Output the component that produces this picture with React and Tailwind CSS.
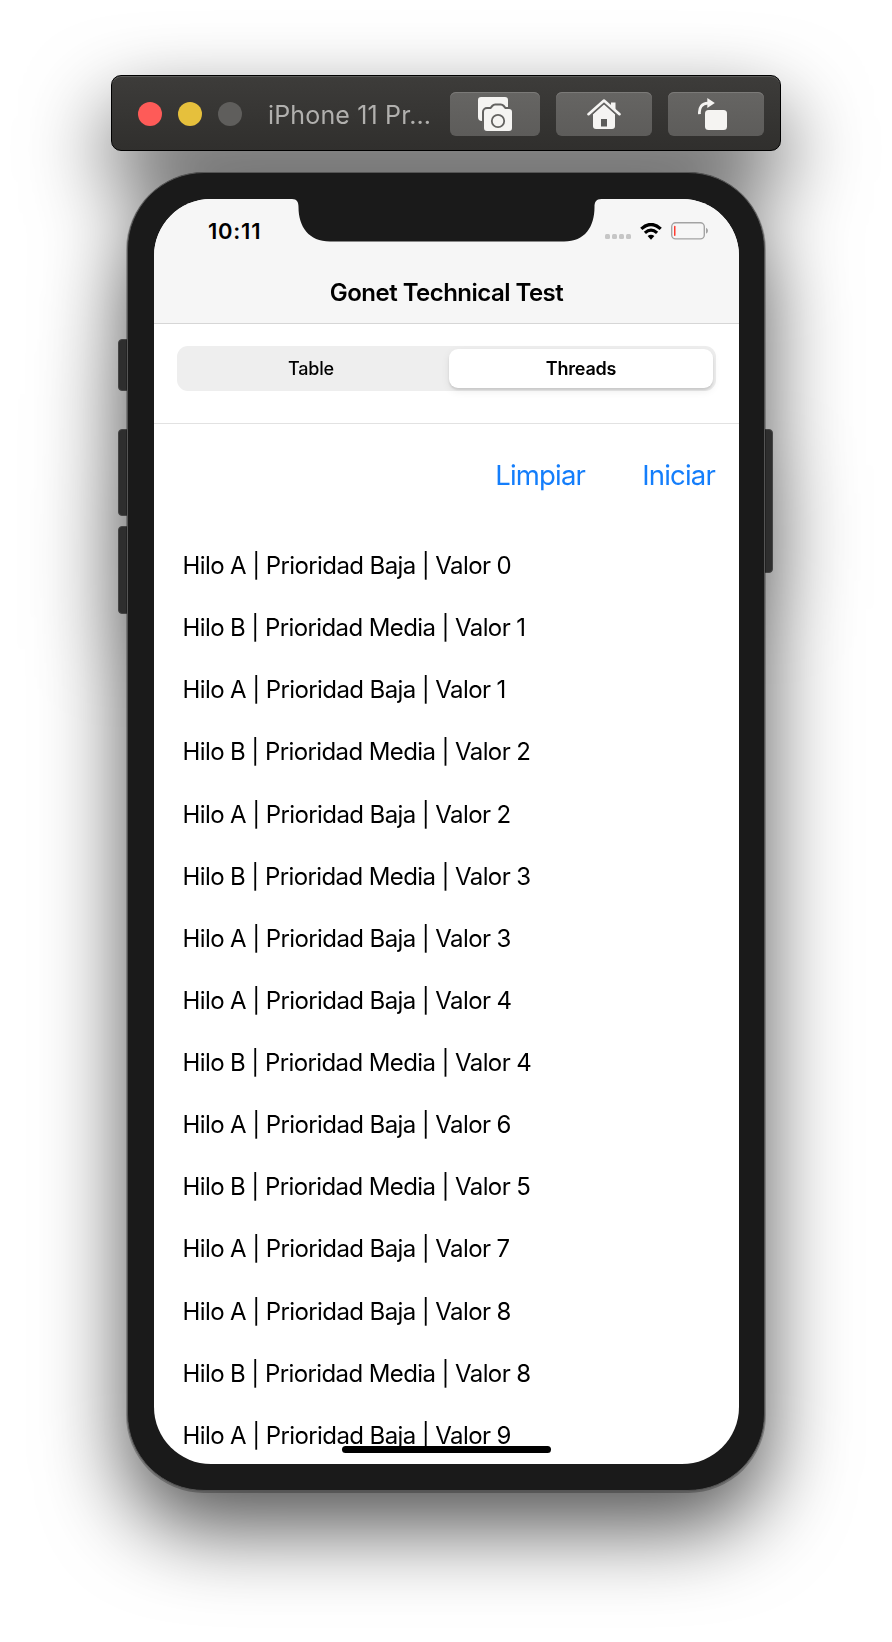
const rows = [
  ["A", "Baja", 0],
  ["B", "Media", 1],
  ["A", "Baja", 1],
  ["B", "Media", 2],
  ["A", "Baja", 2],
  ["B", "Media", 3],
  ["A", "Baja", 3],
  ["A", "Baja", 4],
  ["B", "Media", 4],
  ["A", "Baja", 6],
  ["B", "Media", 5],
  ["A", "Baja", 7],
  ["A", "Baja", 8],
  ["B", "Media", 8],
  ["A", "Baja", 9],
];

function CameraIcon() {
  return (
    <svg width="34" height="34" viewBox="0 0 34 34">
      <path d="M3 0H27a3 3 0 0 1 3 3V11H0V3a3 3 0 0 1 3-3ZM0 10H12V24H4a4 4 0 0 1-4-4Z" fill="#f5f4f2" />
      <path
        d="M9 12h4l2.2-2.6Q16 8.500 17.200 8.500h5.600Q24 8.500 24.800 9.400L27 12h4a3 3 0 0 1 3 3V31a3 3 0 0 1-3 3H9a3 3 0 0 1-3-3V15a3 3 0 0 1 3-3Z"
        fill="#f5f4f2"
        stroke="#636260"
        strokeWidth="4"
        paintOrder="stroke"
      />
      <circle cx="20" cy="24" r="6.200" fill="none" stroke="#636260" strokeWidth="1.800" />
    </svg>
  );
}

function HomeIcon() {
  return (
    <svg width="34" height="30" viewBox="0 0 34 30">
      <path
        d="M6 15 17 4.500 28 15V27a3 3 0 0 1-3 3H9a3 3 0 0 1-3-3Z"
        fill="#f5f4f2"
      />
      <rect x="14" y="20" width="6" height="7.500" fill="#5d5c5a" />
      <path d="M1.500 15.200 17 1.500 32.500 15.200" fill="none" stroke="#636260" strokeWidth="6" strokeLinejoin="round" />
      <path d="M24 3.500h4.500v9l-4.500-4Z" fill="#f5f4f2" />
      <path d="M1.500 15.200 17 1.500 32.500 15.200" fill="none" stroke="#f5f4f2" strokeWidth="2.600" strokeLinecap="round" strokeLinejoin="round" />
    </svg>
  );
}

function RotateIcon() {
  return (
    <svg width="29" height="32" viewBox="0 0 29 32">
      <path d="M1.500 16.200C.800 9 4 5.400 10 5.200" fill="none" stroke="#f5f4f2" strokeWidth="2.800" />
      <path d="M9.300 0 16.800 5 9.300 10Z" fill="#f5f4f2" />
      <rect x="7" y="12" width="22" height="20" rx="3.500" fill="#f5f4f2" />
    </svg>
  );
}

function ToolButton({ className, children }) {
  return (
    <button
      className={`flex h-11 items-center justify-center rounded-[6px] bg-linear-to-b from-[#666563] to-[#5d5c5a] shadow-[inset_0_1px_0_#7b7a78] ${className}`}
    >
      {children}
    </button>
  );
}

function TitleBar() {
  return (
    <div className="flex h-[76px] w-[670px] items-center rounded-[10px] border border-black bg-linear-to-b from-[#3d3c3a] to-[#302f2d] pt-[2px] pl-[26px] shadow-[inset_0_1px_0_#5c5c5a]">
      <div className="flex gap-4">
        <span className="size-6 rounded-full bg-[#fe5b58]" />
        <span className="size-6 rounded-full bg-[#e6c03c]" />
        <span className="size-6 rounded-full bg-[#5f5e5c]" />
      </div>
      <span className="ml-[26px] w-[182px] pt-[3px] text-[25px] tracking-[0.15px] whitespace-nowrap text-[#b1b0ae]">
        iPhone 11 Pr...
      </span>
      <div className="flex gap-4">
        <ToolButton className="w-[90px]">
          <CameraIcon />
        </ToolButton>
        <ToolButton className="w-24">
          <HomeIcon />
        </ToolButton>
        <ToolButton className="w-24 pr-[7px]">
          <RotateIcon />
        </ToolButton>
      </div>
    </div>
  );
}

function StatusBar() {
  return (
    <div className="flex h-[64px] items-center justify-between pr-[31px] pl-[54px]">
      <span className="text-[22px] font-semibold tracking-[0.75px]">10:11</span>
      <div className="flex items-center">
        <div className="mt-[10px] flex gap-[2px]">
          <span className="size-[5px] rounded-[1.500px] bg-[#c6c6c6]" />
          <span className="size-[5px] rounded-[1.500px] bg-[#c6c6c6]" />
          <span className="size-[5px] rounded-[1.500px] bg-[#c6c6c6]" />
          <span className="size-[5px] rounded-[1.500px] bg-[#c6c6c6]" />
        </div>
        <svg className="ml-[9px]" width="22" height="17" viewBox="0 0 22 17">
          <path d="M1.300 5.900Q11-2.900 20.700 5.900" fill="none" stroke="#000" strokeWidth="3.300" />
          <path d="M4.900 9.900Q11 4.300 17.100 9.900" fill="none" stroke="#000" strokeWidth="3.200" />
          <path d="M7.600 13.100Q11 10.300 14.400 13.100L11 16.800Z" fill="#000" />
        </svg>
        <svg className="ml-[9px]" width="37" height="18" viewBox="0 0 37 18">
          <rect x=".7" y=".7" width="32.600" height="16.200" rx="4" fill="none" stroke="#a3a3a3" strokeWidth="1.400" />
          <path d="M35 5.800q2 .8 2 3t-2 3Z" fill="#a3a3a3" />
          <rect x="3" y="3.800" width="1.500" height="10.200" rx=".7" fill="#ff3b30" />
        </svg>
      </div>
    </div>
  );
}

function Notch() {
  return (
    <svg className="absolute top-0 left-[137px]" width="312" height="43" viewBox="0 0 312 43">
      <path
        d="M0 0H1C6 0 7.500 3 7.500 8C7.500 28 18 42.500 39 42.500H273C294 42.500 303.500 28 303.500 8C303.500 3 305 0 310.500 0Z"
        fill="#1a1a1a"
      />
    </svg>
  );
}

function SideButton({ className }) {
  return (
    <span className={`absolute w-[12px] rounded-[4px] border border-[#454545] bg-[#2e2e2e] ${className}`} />
  );
}

function Phone() {
  return (
    <div className="relative mt-[21px] h-[1319px] w-[638px]">
      <SideButton className="top-[167px] left-[-9.500px] h-[52px]" />
      <SideButton className="top-[257px] left-[-9.500px] h-[87px]" />
      <SideButton className="top-[354px] left-[-9.500px] h-[88px]" />
      <SideButton className="top-[257px] right-[-7.500px] h-[144px]" />
      <div className="relative h-full rounded-[77px] border border-[#555555] bg-[#1a1a1a] pt-[26px] pl-[26px] shadow-[0_1px_0_1px_rgba(0,0,0,0.25)]">
        <div className="relative flex h-[1265px] w-[585px] flex-col overflow-hidden rounded-[57px] bg-white text-black">
          <header className="h-[125px] shrink-0 border-b border-[#d6d6d6] bg-[#f6f6f6]">
            <StatusBar />
            <h1 className="text-center text-[24px] leading-[59px] font-semibold tracking-[-0.53px]">
              Gonet Technical Test
            </h1>
          </header>
          <div className="h-[100px] shrink-0 border-b border-[#e2e2e2] px-[23px] pt-[22px]">
            <div className="flex h-[45px] rounded-[11px] bg-[#eeeeee] p-[3px] text-[18px]">
              <button className="flex-1 pr-[7px] font-medium tracking-[-0.2px]">Table</button>
              <button className="w-[264px] rounded-[9px] bg-white font-semibold tracking-[-0.2px] shadow-[0_2px_2px_rgba(0,0,0,0.1),0_3px_8px_rgba(0,0,0,0.08)]">
                Threads
              </button>
            </div>
          </div>
          <div className="flex h-[105px] shrink-0 items-center justify-end gap-[57px] pr-[24px] pb-[2px] text-[27.500px] tracking-[-0.8px] text-[#147efb]">
            <button>Limpiar</button>
            <button>Iniciar</button>
          </div>
          <ul className="pt-[6px] pl-[28.500px]">
            {rows.map(([thread, priority, value], i) => (
              <li key={i} className="h-[62.14px] text-[24px] leading-[62px] tracking-[-0.6px] whitespace-nowrap">
                Hilo {thread} | Prioridad {priority} | Valor {value}
              </li>
            ))}
          </ul>
          <span className="absolute bottom-[11px] left-[188px] h-[7px] w-[209px] rounded-full bg-black" />
          <Notch />
        </div>
      </div>
    </div>
  );
}

export default function App() {
  return (
    <div className="h-[1642px] w-[892px] overflow-hidden bg-white font-['Inter','Liberation_Sans',sans-serif]">
      <div className="flex h-full flex-col items-center pt-[75px] drop-shadow-[0_36px_42px_rgba(0,0,0,0.68)]">
        <TitleBar />
        <Phone />
      </div>
    </div>
  );
}
